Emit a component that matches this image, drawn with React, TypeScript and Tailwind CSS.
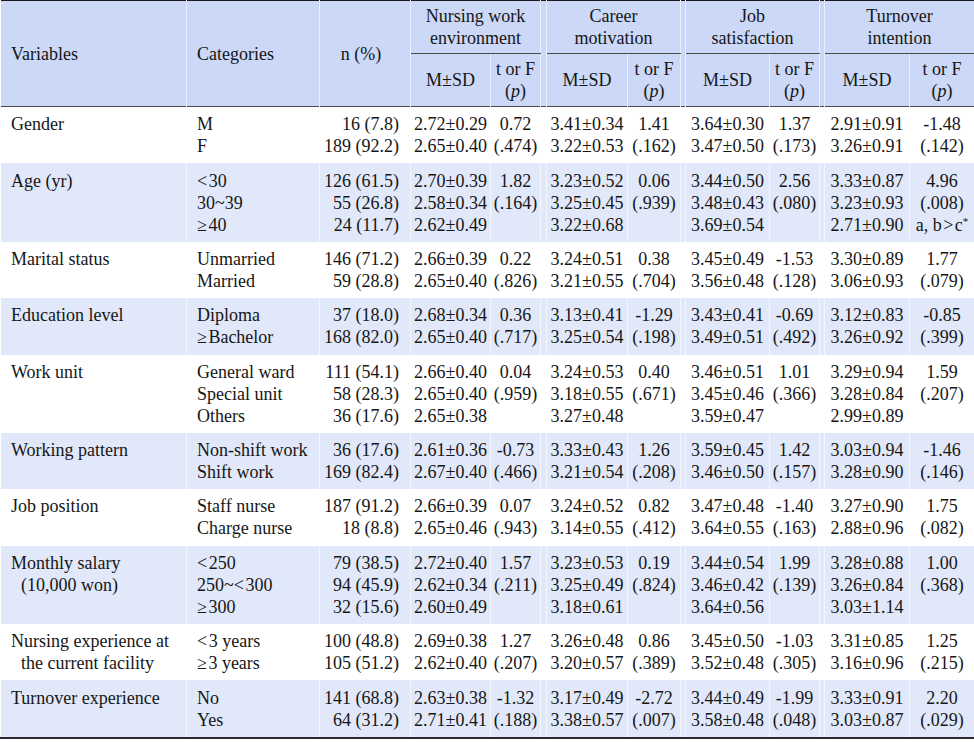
type Row = {
  v: string[]
  c: string[]
  n: string[]
  cells: string[][]
}

const rows: Row[] = [
  {
    v: ['Gender'],
    c: ['M', 'F'],
    n: ['16 (7.8)', '189 (92.2)'],
    cells: [
      ['2.72±0.29', '2.65±0.40'], ['0.72', '(.474)'],
      ['3.41±0.34', '3.22±0.53'], ['1.41', '(.162)'],
      ['3.64±0.30', '3.47±0.50'], ['1.37', '(.173)'],
      ['2.91±0.91', '3.26±0.91'], ['-1.48', '(.142)'],
    ],
  },
  {
    v: ['Age (yr)'],
    c: ['<\u200a30', '30~39', '≥\u200a40'],
    n: ['126 (61.5)', '55 (26.8)', '24 (11.7)'],
    cells: [
      ['2.70±0.39', '2.58±0.34', '2.62±0.49'], ['1.82', '(.164)'],
      ['3.23±0.52', '3.25±0.45', '3.22±0.68'], ['0.06', '(.939)'],
      ['3.44±0.50', '3.48±0.43', '3.69±0.54'], ['2.56', '(.080)'],
      ['3.33±0.87', '3.23±0.93', '2.71±0.90'], ['4.96', '(.008)', 'a, b\u200a>\u200ac*'],
    ],
  },
  {
    v: ['Marital status'],
    c: ['Unmarried', 'Married'],
    n: ['146 (71.2)', '59 (28.8)'],
    cells: [
      ['2.66±0.39', '2.65±0.40'], ['0.22', '(.826)'],
      ['3.24±0.51', '3.21±0.55'], ['0.38', '(.704)'],
      ['3.45±0.49', '3.56±0.48'], ['-1.53', '(.128)'],
      ['3.30±0.89', '3.06±0.93'], ['1.77', '(.079)'],
    ],
  },
  {
    v: ['Education level'],
    c: ['Diploma', '≥\u200aBachelor'],
    n: ['37 (18.0)', '168 (82.0)'],
    cells: [
      ['2.68±0.34', '2.65±0.40'], ['0.36', '(.717)'],
      ['3.13±0.41', '3.25±0.54'], ['-1.29', '(.198)'],
      ['3.43±0.41', '3.49±0.51'], ['-0.69', '(.492)'],
      ['3.12±0.83', '3.26±0.92'], ['-0.85', '(.399)'],
    ],
  },
  {
    v: ['Work unit'],
    c: ['General ward', 'Special unit', 'Others'],
    n: ['111 (54.1)', '58 (28.3)', '36 (17.6)'],
    cells: [
      ['2.66±0.40', '2.65±0.40', '2.65±0.38'], ['0.04', '(.959)'],
      ['3.24±0.53', '3.18±0.55', '3.27±0.48'], ['0.40', '(.671)'],
      ['3.46±0.51', '3.45±0.46', '3.59±0.47'], ['1.01', '(.366)'],
      ['3.29±0.94', '3.28±0.84', '2.99±0.89'], ['1.59', '(.207)'],
    ],
  },
  {
    v: ['Working pattern'],
    c: ['Non-shift work', 'Shift work'],
    n: ['36 (17.6)', '169 (82.4)'],
    cells: [
      ['2.61±0.36', '2.67±0.40'], ['-0.73', '(.466)'],
      ['3.33±0.43', '3.21±0.54'], ['1.26', '(.208)'],
      ['3.59±0.45', '3.46±0.50'], ['1.42', '(.157)'],
      ['3.03±0.94', '3.28±0.90'], ['-1.46', '(.146)'],
    ],
  },
  {
    v: ['Job position'],
    c: ['Staff nurse', 'Charge nurse'],
    n: ['187 (91.2)', '18 (8.8)'],
    cells: [
      ['2.66±0.39', '2.65±0.46'], ['0.07', '(.943)'],
      ['3.24±0.52', '3.14±0.55'], ['0.82', '(.412)'],
      ['3.47±0.48', '3.64±0.55'], ['-1.40', '(.163)'],
      ['3.27±0.90', '2.88±0.96'], ['1.75', '(.082)'],
    ],
  },
  {
    v: ['Monthly salary', '(10,000 won)'],
    c: ['<\u200a250', '250~<\u200a300', '≥\u200a300'],
    n: ['79 (38.5)', '94 (45.9)', '32 (15.6)'],
    cells: [
      ['2.72±0.40', '2.62±0.34', '2.60±0.49'], ['1.57', '(.211)'],
      ['3.23±0.53', '3.25±0.49', '3.18±0.61'], ['0.19', '(.824)'],
      ['3.44±0.54', '3.46±0.42', '3.64±0.56'], ['1.99', '(.139)'],
      ['3.28±0.88', '3.26±0.84', '3.03±1.14'], ['1.00', '(.368)'],
    ],
  },
  {
    v: ['Nursing experience at', 'the current facility'],
    c: ['<\u200a3 years', '≥\u200a3 years'],
    n: ['100 (48.8)', '105 (51.2)'],
    cells: [
      ['2.69±0.38', '2.62±0.40'], ['1.27', '(.207)'],
      ['3.26±0.48', '3.20±0.57'], ['0.86', '(.389)'],
      ['3.45±0.50', '3.52±0.48'], ['-1.03', '(.305)'],
      ['3.31±0.85', '3.16±0.96'], ['1.25', '(.215)'],
    ],
  },
  {
    v: ['Turnover experience'],
    c: ['No', 'Yes'],
    n: ['141 (68.8)', '64 (31.2)'],
    cells: [
      ['2.63±0.38', '2.71±0.41'], ['-1.32', '(.188)'],
      ['3.17±0.49', '3.38±0.57'], ['-2.72', '(.007)'],
      ['3.44±0.49', '3.58±0.48'], ['-1.99', '(.048)'],
      ['3.33±0.91', '3.03±0.87'], ['2.20', '(.029)'],
    ],
  },
]

const groups = [
  ['Nursing work', 'environment'],
  ['Career', 'motivation'],
  ['Job', 'satisfaction'],
  ['Turnover', 'intention'],
]

const cellBase = 'border-x border-white/60 align-top leading-[22px] py-[6.2px]'
const th = 'border-x border-white/60 font-normal leading-[22px] py-[4px]'

function Lines({ items }: { items: string[] }) {
  return (
    <>
      {items.map((t, i) => (
        <div key={i} className="whitespace-nowrap">
          {t.endsWith('*') ? (
            <>
              {t.slice(0, -1)}
              <sup className="text-[11px]">*</sup>
            </>
          ) : (
            t
          )}
        </div>
      ))}
    </>
  )
}

function TorF() {
  return (
    <th className={`${th} text-center`}>
      t or F
      <br />
      (<i>p</i>)
    </th>
  )
}

export default function App() {
  return (
    <div className="w-[974px] bg-white text-[18px] text-[#161616] [font-family:'Liberation_Serif',serif]">
      <table className="w-[974px] table-fixed border-collapse border-t border-[#1a1a1a]">
        <colgroup>
          <col className="w-[186px]" />
          <col className="w-[133px]" />
          <col className="w-[91px]" />
          <col className="w-[80px]" />
          <col className="w-[50px]" />
          <col className="w-[6px]" />
          <col className="w-[81px]" />
          <col className="w-[53px]" />
          <col className="w-[5px]" />
          <col className="w-[84px]" />
          <col className="w-[50px]" />
          <col className="w-[5px]" />
          <col className="w-[85px]" />
          <col className="w-[65px]" />
        </colgroup>
        <thead className="border-b border-[#4a4a4a] bg-[#cbd8f7]">
          <tr>
            <th rowSpan={2} className={`${th} pl-[10px] text-left`}>
              Variables
            </th>
            <th rowSpan={2} className={`${th} pl-[10px] text-left`}>
              Categories
            </th>
            <th rowSpan={2} className={`${th} pr-[8px] text-center`}>
              n (%)
            </th>
            {groups.map((g, i) => (
              <>
                {i > 0 && <th key={`s${i}`} rowSpan={2} className={th} />}
                <th key={g[0]} colSpan={2} className={`${th} border-b border-b-[#4a4a4a] text-center`}>
                  {g[0]}
                  <br />
                  {g[1]}
                </th>
              </>
            ))}
          </tr>
          <tr>
            <th className={`${th} text-center`}>M±SD</th>
            <TorF />
            <th className={`${th} text-center`}>M±SD</th>
            <TorF />
            <th className={`${th} text-center`}>M±SD</th>
            <TorF />
            <th className={`${th} text-center`}>M±SD</th>
            <TorF />
          </tr>
        </thead>
        <tbody className="border-b-2 border-[#2a2a2a]">
          {rows.map((r, ri) => (
            <tr key={ri} className={ri % 2 === 1 ? 'bg-[#e1e8f9]' : 'bg-white'}>
              <td className={`${cellBase} pl-[10px]`}>
                {r.v.map((t, i) => (
                  <div key={i} className={i > 0 ? 'whitespace-nowrap pl-[10px]' : 'whitespace-nowrap'}>
                    {t}
                  </div>
                ))}
              </td>
              <td className={`${cellBase} pl-[10px]`}>
                <Lines items={r.c} />
              </td>
              <td className={`${cellBase} pr-[11px] text-right`}>
                <Lines items={r.n} />
              </td>
              {r.cells.map((c, ci) => (
                <>
                  {ci > 0 && ci % 2 === 0 && <td key={`sp${ci}`} className={cellBase} />}
                  <td key={ci} className={`${cellBase} text-center`}>
                    <Lines items={c} />
                  </td>
                </>
              ))}
            </tr>
          ))}
        </tbody>
      </table>
      <div className="pl-[10px] pt-[4px] text-[15px] leading-[20px]">
        *Scheffé test; a: &lt;30, b: 30~39, c: ≥40; M=Mean; SD=Standard deviation.
      </div>
    </div>
  )
}
